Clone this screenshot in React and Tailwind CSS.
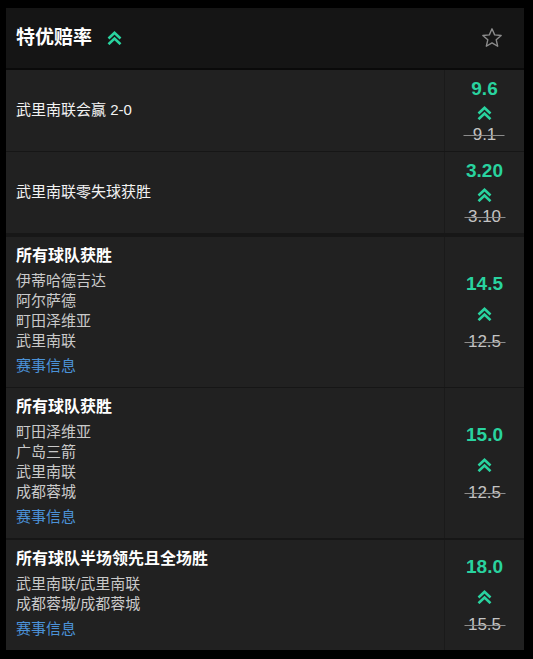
import React from 'react';

const font = { fontFamily: '"Liberation Sans", "Noto Sans CJK SC", sans-serif' };

const DoubleUp = ({ className = '' }) => (
  <svg width="15" height="14" viewBox="0 0 15 14" className={className} fill="none">
    <polyline points="1.5,7.5 7.5,1.8 13.5,7.5" stroke="#29d39f" strokeWidth="2.6" />
    <polyline points="1.5,13.2 7.5,7.5 13.5,13.2" stroke="#29d39f" strokeWidth="2.6" />
  </svg>
);

const StarOutline = () => (
  <svg width="22" height="22" viewBox="0 0 24 24" fill="none">
    <polygon
      points="12,2 14.9,8.6 22,9.3 16.6,14 18.2,21 12,17.3 5.8,21 7.4,14 2,9.3 9.1,8.6"
      stroke="#8c8c8c"
      strokeWidth="1.5"
      strokeLinejoin="round"
    />
  </svg>
);

const Odds = ({ now, was, compact }) => (
  <div
    className={`w-[80px] shrink-0 border-l border-[#1a1a1a] flex flex-col items-center justify-center ${compact ? 'gap-[5px]' : 'gap-[11px]'}`}
  >
    <span className="text-[19px] leading-[24px] font-bold text-[#29d39f]">{now}</span>
    <DoubleUp />
    <span className="relative text-[17px] leading-[20px] text-[#c4c4c4]">
      {was}
      <span className="absolute left-1/2 top-[10px] -translate-x-1/2 w-[41px] h-px bg-[#8c8c8c]" />
    </span>
  </div>
);

const SimpleRow = ({ label, now, was }) => (
  <div className="flex h-[81px] bg-[#212121]">
    <div className="flex-1 flex items-center pl-[10px] text-[15px] text-[#f2f2f2]">{label}</div>
    <Odds now={now} was={was} compact />
  </div>
);

const MultiRow = ({ title, teams, now, was }) => (
  <div className="flex bg-[#212121]">
    <div className="flex-1 pl-[10px] pt-[8px] pb-[11px]">
      <div className="text-[16px] leading-[22px] font-bold text-white">{title}</div>
      <div className="mt-[4px]">
        {teams.map((t) => (
          <div key={t} className="text-[15px] leading-[20px] text-[#c9c9c9]">{t}</div>
        ))}
      </div>
      <div className="mt-[5px] text-[15px] leading-[20px] text-[#4b92d8]">赛事信息</div>
    </div>
    <Odds now={now} was={was} />
  </div>
);

export default function App() {
  return (
    <div className="min-h-screen bg-black pt-[8px] pl-[6px]" style={font}>
      <div className="w-[518px] bg-[#212121]">
        <div className="h-[60px] bg-[#151515] flex items-center justify-between pl-[10px] pr-[21px]">
          <div className="flex items-center gap-[15px]">
            <span className="text-[19px] font-bold text-white">特优赔率</span>
            <DoubleUp />
          </div>
          <StarOutline />
        </div>
        <div className="h-[2px] bg-[#0a0a0a]" />
        <SimpleRow label="武里南联会赢 2-0" now="9.6" was="9.1" />
        <div className="h-px bg-[#161616]" />
        <SimpleRow label="武里南联零失球获胜" now="3.20" was="3.10" />
        <div className="h-[4px] bg-[#171717]" />
        <MultiRow
          title="所有球队获胜"
          teams={['伊蒂哈德吉达', '阿尔萨德', '町田泽维亚', '武里南联']}
          now="14.5"
          was="12.5"
        />
        <div className="h-px bg-[#161616]" />
        <MultiRow
          title="所有球队获胜"
          teams={['町田泽维亚', '广岛三箭', '武里南联', '成都蓉城']}
          now="15.0"
          was="12.5"
        />
        <div className="h-[2px] bg-[#161616]" />
        <MultiRow
          title="所有球队半场领先且全场胜"
          teams={['武里南联/武里南联', '成都蓉城/成都蓉城']}
          now="18.0"
          was="15.5"
        />
      </div>
    </div>
  );
}
